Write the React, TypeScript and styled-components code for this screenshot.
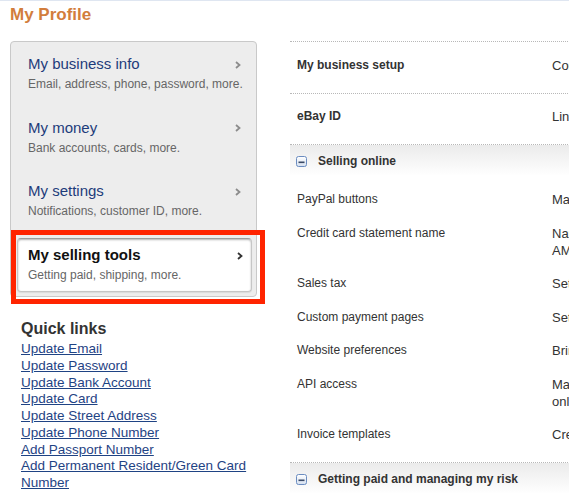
import React from 'react';
import styled, { createGlobalStyle, css } from 'styled-components';

const GlobalStyle = createGlobalStyle`
    html, body {
        margin: 0;
        padding: 0;
        background: #fff;
    }
    body {
        font-family: "Liberation Sans", Arial, Helvetica, sans-serif;
        color: #333;
    }
`;

interface NavEntry {
    title: string;
    subtitle: string;
    active?: boolean;
}

const navItems: NavEntry[] = [
    { title: 'My business info', subtitle: 'Email, address, phone, password, more.' },
    { title: 'My money', subtitle: 'Bank accounts, cards, more.' },
    { title: 'My settings', subtitle: 'Notifications, customer ID, more.' },
    { title: 'My selling tools', subtitle: 'Getting paid, shipping, more.', active: true },
];

const quickLinks = [
    'Update Email',
    'Update Password',
    'Update Bank Account',
    'Update Card',
    'Update Street Address',
    'Update Phone Number',
    'Add Passport Number',
    'Add Permanent Resident/Green Card Number',
];

interface Row {
    label: string;
    value: string[];
}

const topRows: Row[] = [
    { label: 'My business setup', value: ['Complete'] },
    { label: 'eBay ID', value: ['Linked'] },
];

const sellingRows: Row[] = [
    { label: 'PayPal buttons', value: ['Manage your buttons'] },
    { label: 'Credit card statement name', value: ['Name that appears on', 'AMEX statements'] },
    { label: 'Sales tax', value: ['Set up sales tax'] },
    { label: 'Custom payment pages', value: ['Set up payment pages'] },
    { label: 'Website preferences', value: ['Bring buyers back'] },
    { label: 'API access', value: ['Manage API access for', 'online stores'] },
    { label: 'Invoice templates', value: ['Create templates'] },
];

const Chevron = ({ dark }: { dark?: boolean }) => (
    <ChevronSvg width="6" height="8" viewBox="0 0 6 8">
        <path d="M1 1 L4.5 4 L1 7" fill="none" stroke={dark ? '#333' : '#8c8c8c'} strokeWidth="1.8" />
    </ChevronSvg>
);

const MinusIcon = () => (
    <svg width="11" height="11" viewBox="0 0 11 11">
        <defs>
            <linearGradient id="mg" x1="0" y1="0" x2="0" y2="1">
                <stop offset="0" stopColor="#ffffff" />
                <stop offset="1" stopColor="#d5e0f0" />
            </linearGradient>
        </defs>
        <rect x="0.5" y="0.5" width="10" height="10" rx="2" fill="url(#mg)" stroke="#6b8cc0" />
        <rect x="2.5" y="5.5" width="6" height="1.6" fill="#3a4a66" />
    </svg>
);

const App = () => (
    <Page>
        <GlobalStyle />
        <Title>My Profile</Title>
        <Main>
            <LeftColumn>
                <NavBox>
                    {navItems.map(item => (
                        <NavItem key={item.title} active={item.active}>
                            <NavTitleRow>
                                <NavTitle active={item.active}>{item.title}</NavTitle>
                                <Chevron dark={item.active} />
                            </NavTitleRow>
                            <NavSubtitle>{item.subtitle}</NavSubtitle>
                        </NavItem>
                    ))}
                </NavBox>
                <QuickLinks>
                    <QuickTitle>Quick links</QuickTitle>
                    {quickLinks.map(link => (
                        <QuickLink key={link} href="#">{link}</QuickLink>
                    ))}
                </QuickLinks>
            </LeftColumn>

            <RightColumn>
                {topRows.map(row => (
                    <TopRow key={row.label}>
                        <StrongLabel>{row.label}</StrongLabel>
                        <Value>{row.value.map(v => <div key={v}>{v}</div>)}</Value>
                    </TopRow>
                ))}
                <Section>
                    <SectionHeader>
                        <MinusIcon />
                        <span>Selling online</span>
                    </SectionHeader>
                    <SectionBody>
                        {sellingRows.map(row => (
                            <DetailRow key={row.label}>
                                <Label>{row.label}</Label>
                                <Value>{row.value.map(v => <div key={v}>{v}</div>)}</Value>
                            </DetailRow>
                        ))}
                    </SectionBody>
                </Section>
                <Section>
                    <SectionHeader>
                        <MinusIcon />
                        <span>Getting paid and managing my risk</span>
                    </SectionHeader>
                </Section>
            </RightColumn>
        </Main>
    </Page>
);

export default App;

const Page = styled.div`
    width: 569px;
    height: 502px;
    overflow: hidden;
    border-top: 1px solid #dfe6f1;
    box-sizing: border-box;
`;

const Title = styled.h1`
    margin: 0 0 16px;
    padding: 4px 0 0 10px;
    font-size: 17px;
    line-height: 20px;
    font-weight: bold;
    color: #d27d3c;
`;

const Main = styled.div`
    display: flex;
    align-items: flex-start;
    gap: 33px;
    padding-left: 10px;
`;

const LeftColumn = styled.div`
    width: 247px;
    flex-shrink: 0;
`;

const NavBox = styled.div`
    background: #ededed;
    border: 1px solid #c9c9c9;
    border-radius: 4px;
`;

const NavItem = styled.div<{ active?: boolean }>`
    height: 63.5px;
    box-sizing: border-box;
    padding: 13px 15px 0 17px;

    ${props => props.active && css`
        position: relative;
        height: 54px;
        margin: 5.5px 4px 4px 6px;
        padding: 7px 8px 0 10px;
        background: #fff;
        border: 1px solid #c6c6c6;
        border-top-color: #9d9d9d;
        border-radius: 4px;
        box-shadow: inset 0 1px 2px rgba(0, 0, 0, 0.3), 0 1px 1px rgba(0, 0, 0, 0.08);

        &::after {
            content: '';
            position: absolute;
            top: -9px;
            left: -7px;
            right: -14px;
            bottom: -13px;
            border: 5px solid #ff2400;
            pointer-events: none;
        }
    `}
`;

const NavTitleRow = styled.div`
    display: flex;
    align-items: center;
    justify-content: space-between;
`;

const NavTitle = styled.div<{ active?: boolean }>`
    font-size: 15px;
    line-height: 18px;
    color: ${props => (props.active ? '#111' : '#1d3c7b')};
    font-weight: ${props => (props.active ? 'bold' : 'normal')};
`;

const ChevronSvg = styled.svg`
    flex-shrink: 0;
    margin-top: 1px;
`;

const NavSubtitle = styled.div`
    margin-top: 3px;
    font-size: 12px;
    line-height: 16px;
    color: #666;
    white-space: nowrap;
`;

const QuickLinks = styled.div`
    display: flex;
    flex-direction: column;
    align-items: flex-start;
    margin-top: 22px;
    padding-left: 11px;
`;

const QuickTitle = styled.div`
    font-size: 16px;
    line-height: 20px;
    font-weight: bold;
    color: #333;
    margin-bottom: 2px;
`;

const QuickLink = styled.a`
    font-size: 13.5px;
    line-height: 16.75px;
    color: #1f4384;
    text-decoration: underline;
`;

const RightColumn = styled.div`
    width: 460px;
    flex-shrink: 0;
`;

const TopRow = styled.div`
    display: grid;
    grid-template-columns: 255px 1fr;
    align-items: start;
    padding: 14.5px 0 19px 7px;
    border-top: 1px dotted #b8b8b8;
`;

const StrongLabel = styled.div`
    font-size: 12px;
    line-height: 17px;
    font-weight: bold;
    color: #333;
`;

const Label = styled.div`
    font-size: 12px;
    line-height: 17px;
    color: #333;
`;

const Value = styled.div`
    font-size: 13px;
    line-height: 17px;
    color: #333;
    white-space: nowrap;
`;

const Section = styled.div`
    border-top: 1px dotted #b8b8b8;
`;

const SectionHeader = styled.div`
    display: flex;
    align-items: flex-start;
    gap: 11px;
    height: 31px;
    padding: 8px 0 0 6px;
    box-sizing: border-box;
    font-size: 12px;
    line-height: 17px;
    font-weight: bold;
    color: #333;
    background: linear-gradient(#ebebeb, #ffffff);

    svg {
        margin-top: 3px;
    }
`;

const SectionBody = styled.div`
    padding: 7px 0 10px;
`;

const DetailRow = styled.div`
    display: grid;
    grid-template-columns: 255px 1fr;
    align-items: start;
    padding: 8px 0 8.5px 7px;
`;
